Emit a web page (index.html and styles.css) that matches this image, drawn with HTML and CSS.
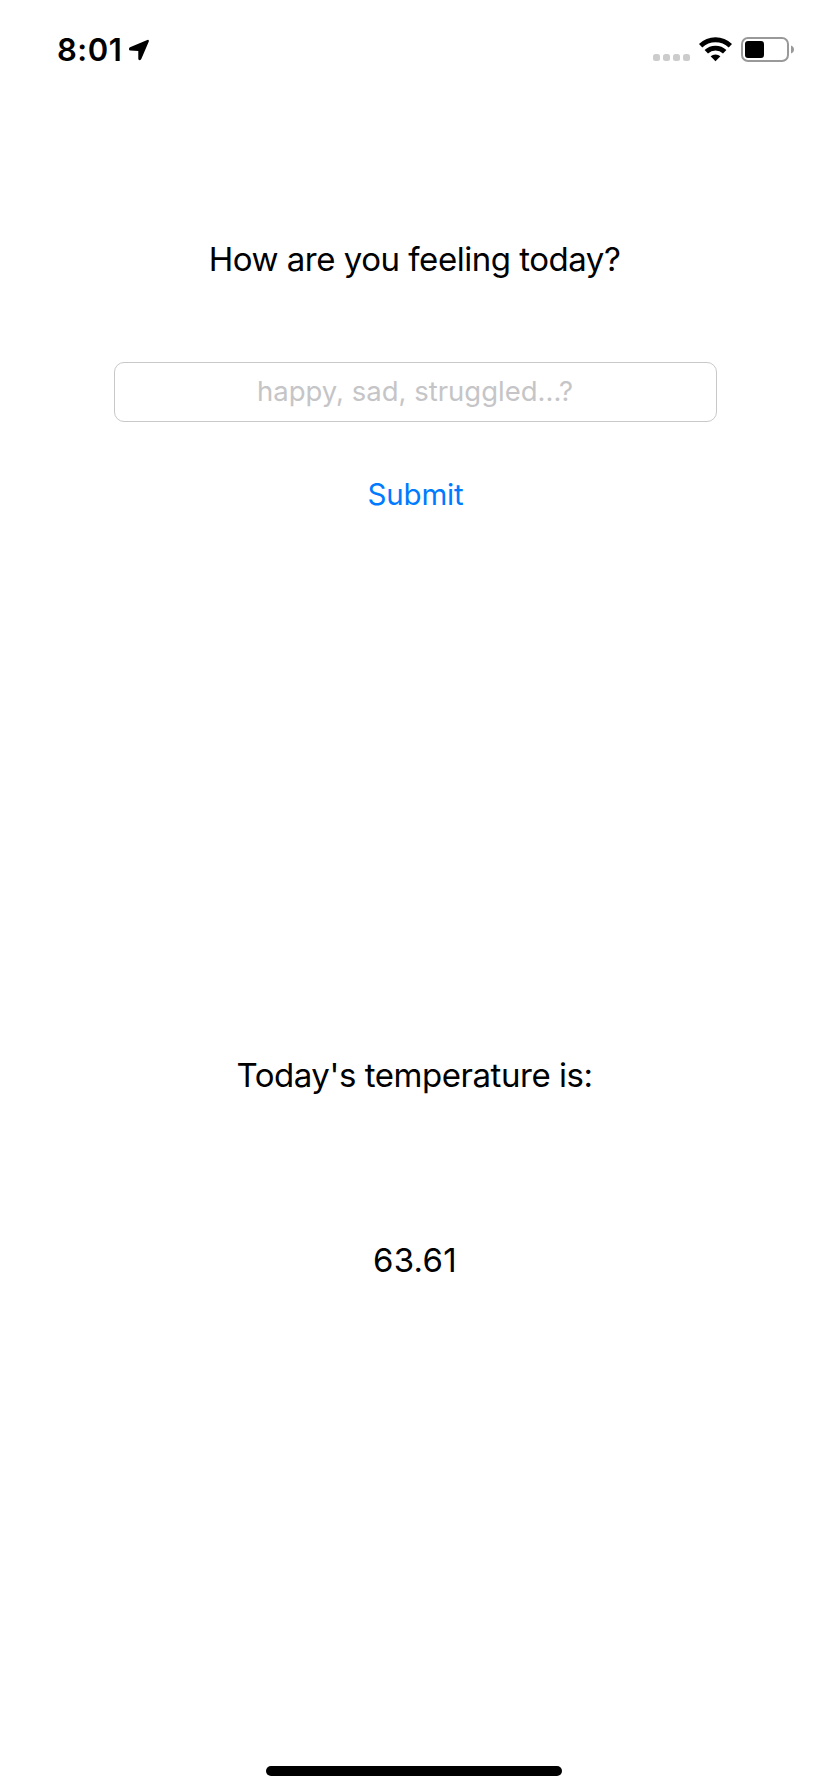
FILE: index.html
```html
<!DOCTYPE html>
<html lang="en">
<head>
<meta charset="utf-8">
<title>How are you feeling today?</title>
<link rel="stylesheet" href="styles.css">
</head>
<body>
<div class="screen">
  <header class="status">
    <span class="time">8:01</span>
    <svg class="location" width="22" height="22" viewBox="0 0 22 22"><path d="M2 8.2 19.3 .9Q21.3 .4 20.8 2.4L13.4 19.8Q12.6 21.6 11.1 21Q10.3 20.6 10.3 19.8V11.9L2.2 11.6Q1.2 11.4 1 10.4Q.8 8.8 2 8.2Z"/></svg>
    <svg class="indicators" width="142" height="26" viewBox="0 0 142 26">
      <g fill="#ccc"><rect x="0" y="18" width="7" height="7" rx="2.5"/><rect x="10" y="18" width="7" height="7" rx="2.5"/><rect x="20" y="18" width="7" height="7" rx="2.5"/><rect x="30" y="18" width="7" height="7" rx="2.5"/></g>
      <path d="M46 8.1a23.5 23.5 0 0 1 33 0l-3.3 3.5a18.8 18.8 0 0 0-26.4 0z"/>
      <path d="M51.6 14.1a15.6 15.6 0 0 1 21.8 0l-3.4 3.5a10.8 10.8 0 0 0-15 0z"/>
      <path d="M57.6 20.3a7.2 7.2 0 0 1 9.8 0l-4.9 5z"/>
      <rect x="89" y="2" width="46" height="23" rx="6" fill="none" stroke="#999" stroke-width="2"/>
      <rect x="92" y="5" width="19" height="17" rx="3"/>
      <path d="M138 9.5q3 1.2 3 4t-3 4z" fill="#999"/>
    </svg>
  </header>
  <main class="content">
    <h1 class="label question">How are you feeling today?</h1>
    <input class="field" type="text" placeholder="happy, sad, struggled...?">
    <button class="submit" type="button">Submit</button>
    <p class="label caption">Today's temperature is:</p>
    <p class="label value">63.61</p>
  </main>
  <div class="home"></div>
</div>
</body>
</html>
```
FILE: styles.css
```css
* { box-sizing: border-box; }
body { margin: 0; background: #fff; color: #000; font-family: Inter, "Liberation Sans", sans-serif; }
.screen { width: 828px; height: 1792px; display: flex; flex-direction: column; overflow: hidden; }
.status { height: 88px; padding: 32px 33px 0 57px; display: flex; align-items: flex-start; }
.time { width: 71px; font-size: 31px; line-height: 36px; font-weight: 600; white-space: nowrap; letter-spacing: 0.5px; }
.location { margin-top: 7px; }
.indicators { margin: 4px 0 0 auto; }
.content { flex: 1; display: flex; flex-direction: column; align-items: center; }
.label { margin: 0; font-size: 33px; font-weight: 400; line-height: 40px; white-space: nowrap; }
.question { margin-top: 151px; padding-left: 1px; letter-spacing: -0.48px; }
.field { width: 603px; height: 60px; margin: 83px 0 0 2px; padding: 0 14px 2px; border: 1px solid #c8c8c8; border-radius: 10px; background: #fff; font: 400 27.5px Inter, "Liberation Sans", sans-serif; text-align: center; outline: none; }
.field::placeholder { color: #c5c5c7; opacity: 1; }
.submit { margin: 54px 0 0 3px; padding: 0; border: 0; background: none; color: #007aff; font: 400 29.5px/36px Inter, "Liberation Sans", sans-serif; letter-spacing: -0.15px; }
.caption { margin-top: 543px; padding-left: 1px; letter-spacing: -0.45px; }
.value { margin-top: 145px; padding-left: 2px; letter-spacing: 0.3px; }
.home { width: 296px; height: 10px; margin: 0 auto 16px; border-radius: 5px; background: #000; }
```
